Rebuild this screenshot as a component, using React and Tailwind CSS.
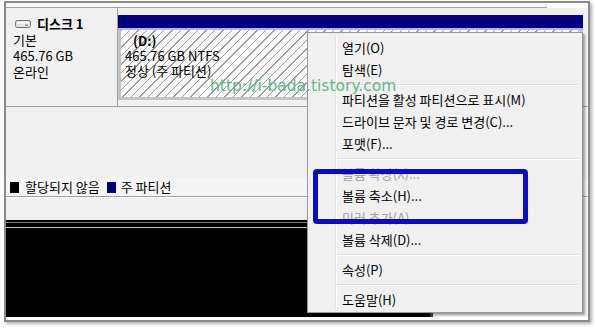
import React from 'react';

const menuItems = [
  { label: '열기(O)' },
  { label: '탐색(E)' },
  { sep: true },
  { label: '파티션을 활성 파티션으로 표시(M)' },
  { label: '드라이브 문자 및 경로 변경(C)...' },
  { label: '포맷(F)...' },
  { sep: true },
  { label: '볼륨 확장(X)...', disabled: true },
  { label: '볼륨 축소(H)...' },
  { label: '미러 추가(A)...', disabled: true },
  { label: '볼륨 삭제(D)...' },
  { sep: true },
  { label: '속성(P)' },
  { sep: true },
  { label: '도움말(H)' },
];

function DiskIcon() {
  return (
    <svg width="16" height="8" viewBox="0 0 16 8">
      <rect x="0.5" y="0.5" width="15" height="7" rx="2" fill="#e2e2e2" stroke="#6c6c6c" />
      <rect x="2" y="1.5" width="12" height="2" fill="#fbfbfb" />
      <rect x="10" y="4.5" width="3" height="1.5" fill="#8c8c8c" />
    </svg>
  );
}

function ContextMenu() {
  return (
    <div className="absolute left-[307px] top-[32px] w-[276px] h-[281px] bg-[#f0f0f0] border border-[#979797] shadow-[2px_2px_2px_rgba(0,0,0,0.35)] pt-[4px] pb-[1px] px-[2px]">
      <div className="absolute left-[27px] top-[2px] bottom-[2px] w-px bg-[#e2e3e3]" />
      <div className="absolute left-[28px] top-[2px] bottom-[2px] w-px bg-white" />
      {menuItems.map((item, i) =>
        item.sep ? (
          <div key={i} className="h-[8px] ml-[25px] mr-[1px] flex flex-col justify-center">
            <div className="h-px bg-[#e0e0e0]" />
            <div className="h-px bg-white" />
          </div>
        ) : (
          <div
            key={i}
            className={`relative h-[22px] leading-[22px] pl-[32px] whitespace-nowrap ${
              item.disabled ? 'text-[#a0a0a0]' : 'text-black'
            }`}
          >
            {item.label}
          </div>
        )
      )}
    </div>
  );
}

export default function App() {
  return (
    <div className="relative w-[596px] h-[329px] bg-white overflow-hidden font-[family-name:'Noto_Sans_CJK_KR',sans-serif] text-[13px] text-black">
      {/* screenshot frame */}
      <div className="ml-[4px] mt-[1px] w-[586px] h-[321px] border-2 border-[#8a8a8a] shadow-[2px_2px_3px_rgba(0,0,0,0.3)] bg-[#f0f0f0] flex flex-col">
        {/* previous row bottom */}
        <div className="h-[5px] flex">
          <div className="w-[541px] border-b border-[#a0a0a0] bg-[#f7f7f7]" />
          <div className="flex-1 bg-white" />
        </div>

        {/* disk row */}
        <div className="h-[99px] flex border-b border-[#a0a0a0]">
          <div className="w-[112px] border-r border-[#a0a0a0] pl-[7px] pt-[8px] leading-[16px]">
            <div className="flex items-center">
              <span className="ml-[2px] mr-[6px] flex"><DiskIcon /></span>
              <span className="font-bold">디스크 1</span>
            </div>
            <div>기본</div>
            <div>465.76 GB</div>
            <div>온라인</div>
          </div>
          <div className="w-[465px] pt-[7px] flex flex-col">
            <div className="h-[13px] bg-[#000080]" />
            <div className="h-[2px] bg-[#b4b8d6]" />
            <div className="h-[70px] border-x-[3px] border-b-[3px] border-[#c4c4c4] bg-[repeating-linear-gradient(135deg,#9c9c9c_0px,#9c9c9c_1px,#fafafa_1px,#fafafa_6px)] pl-[4px] pt-[3px] leading-[15px]">
              <div className="ml-[8px] font-bold">(D:)</div>
              <div>465.76 GB NTFS</div>
              <div>정상 (주 파티션)</div>
            </div>
          </div>
        </div>

        <div className="h-[71px]" />

        {/* legend */}
        <div className="h-[18px] flex items-center pl-[4px] bg-[#f5f5f5]">
          <span className="w-[9px] h-[11px] bg-black" />
          <span className="ml-[6px]">할당되지 않음</span>
          <span className="ml-[7px] w-[9px] h-[11px] bg-[#000080]" />
          <span className="ml-[5px]">주 파티션</span>
        </div>

        <div className="h-[24px] border-t border-[#a0a0a0]">
          <div className="h-px bg-white" />
        </div>

        {/* next disk row */}
        <div className="h-[97px] flex">
          <div className="w-[424px] bg-black flex flex-col">
            <div className="mt-[2px] h-px bg-[#7a7a88]" />
            <div className="mt-[4px] h-px bg-[#c8c8d4]" />
          </div>
          <div className="w-[3px] bg-[#404040]" />
          <div className="flex-1" />
        </div>

        <div className="h-[3px] bg-white" />
      </div>

      <ContextMenu />

      <div className="absolute left-[313px] top-[169px] w-[215px] h-[55px] border-[5px] border-[#0a0ac8] rounded-[4px]" />

      <div className="absolute left-[210px] top-[77px] text-[15.5px] leading-[18px] text-[#5cb98a] font-[family-name:'DejaVu_Sans',sans-serif] whitespace-nowrap">
        http://i-bada.tistory.com
      </div>
    </div>
  );
}
